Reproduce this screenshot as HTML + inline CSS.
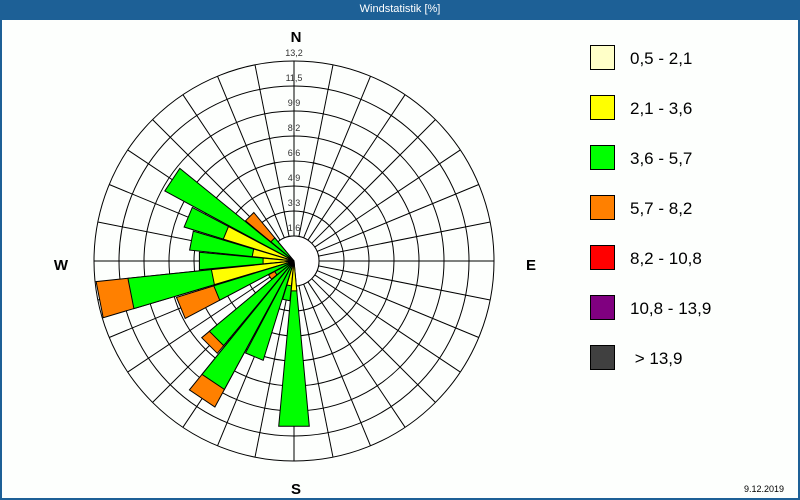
<!DOCTYPE html>
<html><head><meta charset="utf-8"><style>
html,body{margin:0;padding:0;}
body{width:800px;height:500px;position:relative;overflow:hidden;background:#fff;font-family:"Liberation Sans",sans-serif;}
#frame{position:absolute;left:0;top:0;width:796px;height:478px;border:2px solid #1d6096;border-top:20px solid #1d6096;background:#fdfffd;}
#title{position:absolute;left:0;top:0;width:800px;height:20px;line-height:19px;text-align:center;color:#fff;font-size:11px;}
.lg{position:absolute;left:590px;width:23px;height:23px;border:1px solid #000;}
.lt{position:absolute;left:630px;font-size:17px;color:#000;line-height:20px;}
</style></head><body>
<div id="frame"></div>
<div id="title">Windstatistik [%]</div>
<svg id="s" width="800" height="500" style="position:absolute;left:0;top:0"></svg>
<div class="lg" style="top:45px;background:#ffffc8"></div><div class="lt" style="top:49px">0,5 - 2,1</div>
<div class="lg" style="top:95px;background:#ffff00"></div><div class="lt" style="top:99px">2,1 - 3,6</div>
<div class="lg" style="top:145px;background:#00ff00"></div><div class="lt" style="top:149px">3,6 - 5,7</div>
<div class="lg" style="top:195px;background:#ff8000"></div><div class="lt" style="top:199px">5,7 - 8,2</div>
<div class="lg" style="top:245px;background:#ff0000"></div><div class="lt" style="top:249px">8,2 - 10,8</div>
<div class="lg" style="top:295px;background:#800080"></div><div class="lt" style="top:299px">10,8 - 13,9</div>
<div class="lg" style="top:345px;background:#404040"></div><div class="lt" style="top:349px">&nbsp;&gt; 13,9</div>
<div style="position:absolute;left:744px;top:484px;font-size:9px;color:#000">9.12.2019</div>
<script>
var cx=294,cy=261,s='';
function pt(b,r){var a=b*Math.PI/180;return [(cx+r*Math.sin(a)).toFixed(1),(cy-r*Math.cos(a)).toFixed(1)];}
for(var k=8;k>=1;k--)s+='<circle cx="'+cx+'" cy="'+cy+'" r="'+(25*k)+'" fill="none" stroke="#000" stroke-width="1"/>';
for(var i=0;i<32;i++){var b=i*11.25,p1=pt(b,25),p2=pt(b,200);s+='<line x1="'+p1[0]+'" y1="'+p1[1]+'" x2="'+p2[0]+'" y2="'+p2[1]+'" stroke="#000"/>';}
s+='<circle cx="'+cx+'" cy="'+cy+'" r="25" fill="#fff" stroke="#000"/>';
var G='#00ff00',Y='#ffff00',O='#ff8000';
var bars=[[303.75,[[147,G]]],[315,[[30,G],[63,O]]],[292.5,[[74,Y],[115,G]]],[281.25,[[42,Y],[105,G]]],[270,[[31,Y],[95,G]]],
[258.75,[[83,Y],[167,G],[199,O]]],[247.5,[[84,G],[123,O]]],[236.25,[[22,G],[29,O]]],[225,[[110,G],[120,O]]],
[213.75,[[146,G],[166,O]]],[202.5,[[104,G]]],[191.25,[[25,Y],[40,G]]],[180,[[30,Y],[166,G]]]];
var h=5.3;
bars.forEach(function(bb){var b=bb[0],seg=bb[1];
 for(var j=seg.length-1;j>=0;j--){var r=seg[j][0],a=pt(b-h,r),c=pt(b+h,r);
  s+='<polygon points="'+cx+','+cy+' '+a.join(',')+' '+c.join(',')+'" fill="'+seg[j][1]+'" stroke="#000" stroke-width="1"/>';}
});
var labs=['1,6','3,3','4,9','6,6','8,2','9,9','11,5','13,2'];
for(var k=1;k<=8;k++)s+='<text x="'+(cx)+'" y="'+(cy-25*k-5)+'" font-size="9" fill="#333" text-anchor="middle" font-family="Liberation Sans">'+labs[k-1]+'</text>';
var f=' font-size="15" font-weight="bold" text-anchor="middle" font-family="Liberation Sans"';
s+='<text x="296" y="42"'+f+'>N</text><text x="61" y="270"'+f+'>W</text><text x="531" y="270"'+f+'>E</text><text x="296" y="494"'+f+'>S</text>';
document.getElementById('s').innerHTML=s;
</script>
</body></html>
